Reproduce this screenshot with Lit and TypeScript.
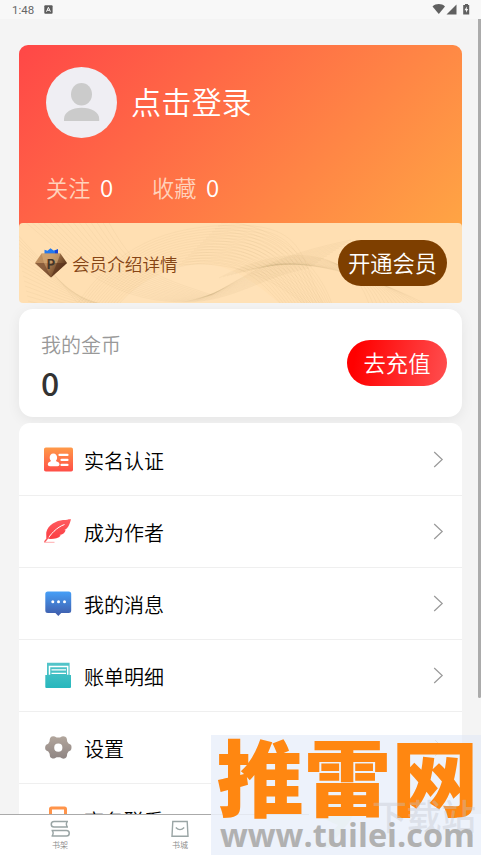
import { LitElement, html, css, svg } from "lit";
import { customElement } from "lit/decorators.js";

const range = (n: number) => Array.from({ length: n }, (_, i) => i);

const icons = {
  id: svg`<svg width="32" height="32" viewBox="0 0 32 32">
    <defs><linearGradient id="a" x1="0" y1="0" x2="0" y2="1"><stop stop-color="#ff9a48"/><stop offset="1" stop-color="#ff4e47"/></linearGradient></defs>
    <rect x="2" y="3.500" width="29" height="24" rx="1.800" fill="url(#a)"/>
    <path d="M11.300 9.400c2.400 0 3.800 1.700 3.800 4.100 0 1.500-.5 2.700-1.300 3.500 2.200.8 3.700 1.700 3.700 3.300 0 1.300-.7 1.900-2 1.900H8c-1.400 0-2.200-.6-2.200-1.900 0-1.600 1.500-2.500 3.300-3.300-.9-.8-1.400-2-1.400-3.500 0-2.400 1.300-4.100 3.600-4.100z" fill="#fff"/>
    <path d="M17.500 10.900h8M19.500 15.900h6M19.500 20.900h6" stroke="#fff" stroke-width="2.200" stroke-linecap="round"/></svg>`,
  quill: svg`<svg width="32" height="32" viewBox="0 0 32 32">
    <defs><linearGradient id="b" x1="0" y1="0" x2="0" y2="1"><stop stop-color="#ff5c60"/><stop offset="1" stop-color="#fb3d42"/></linearGradient></defs>
    <path d="M29 3.200c-2.500-.2-5 .9-8 .7-6.300.6-15.200 4.800-16.700 12.300-.2 2 .2 4.500 0 6.300 4 .8 11.500.8 14.500-3l-1.500-.5c3.500-.2 5.700-2.500 6.300-4.800l-1.300-.2C27 12.200 27.800 6.700 29 3.200z" fill="url(#b)"/>
    <path d="M22.500 8.500C15 11 8 18.500 4.500 25" fill="none" stroke="#fff" stroke-width="1"/>
    <path d="M6.500 21 2.500 26" fill="none" stroke="#fa5558" stroke-width="1.300"/>
    <path d="M2 26.300h10.500" stroke="#ffadb0" stroke-width="1"/></svg>`,
  chat: svg`<svg width="32" height="32" viewBox="0 0 32 32">
    <defs><linearGradient id="c" x1="0" y1="0" x2="0" y2="1"><stop stop-color="#469ff7"/><stop offset="1" stop-color="#3f5aa8"/></linearGradient></defs>
    <path d="M5.500 3.500h21.200Q29.200 3.500 29.200 6v16.500Q29.200 25 26.700 25h-7.500L16.300 28l-2.900-3H5.800Q3.300 25 3.300 22.500V6Q3.300 3.500 5.800 3.500z" fill="url(#c)"/>
    <g fill="#fff"><circle cx="10.800" cy="13.800" r="1.500"/><circle cx="16.500" cy="13.800" r="1.500"/><circle cx="22.500" cy="13.800" r="1.500"/></g></svg>`,
  bill: svg`<svg width="32" height="32" viewBox="0 0 32 32">
    <defs><linearGradient id="d" x1="0" y1="0" x2="0" y2="1"><stop stop-color="#55c5c9"/><stop offset="1" stop-color="#27b7bd"/></linearGradient></defs>
    <path d="M5 2.700h22.600V15H29v12q0 1-1 1H4.300q-1 0-1-1V15H5z" fill="url(#d)"/>
    <path d="M7.500 14.800V6.500h18.200v8.300" fill="none" stroke="#fff" stroke-width="1.500"/>
    <path d="M9.500 9.900h14.500M9.500 13.300h14.500" stroke="#fff" stroke-width="1.300"/></svg>`,
  gear: svg`<svg width="32" height="32" viewBox="0 0 32 32">
    <defs><linearGradient id="e" x1="0" y1="0" x2="0" y2="1"><stop stop-color="#b2a69c"/><stop offset="1" stop-color="#8f8583"/></linearGradient></defs>
    <path transform="translate(-.9 .3)" fill-rule="evenodd" fill="url(#e)" d="M10.500 4.200q2-.7 3.200 0l1.800 1h3.400l1.800-1q1.600-.8 3.500.2 1.500.8 1.600 2.500l.3 2.200 1.300 2.200 2 1q1.300.9 1 3.200 0 1.900-1 2.600l-2 1-1.300 2.300-.3 2.400q-.2 1.500-1.700 2.200-1.800.8-3.300 0l-1.800-1.100h-3.500l-1.800 1.100q-1.600.7-3.300-.2-1.600-.8-1.600-2.200l-.3-2.200-1.300-2.300-2-1Q4 17.700 4 15.700q0-2.300 1.100-3.200l2-1 1.300-2.200.3-2.300q.1-1.900 1.800-2.800zM17.200 11.300a4.100 4.100 0 1 0 0 8.200 4.100 4.100 0 0 0 0-8.200z"/></svg>`,
  phone: svg`<svg width="32" height="32" viewBox="0 0 32 32">
    <rect x="8.500" y="4" width="15" height="24" rx="1" fill="none" stroke="#ff944a" stroke-width="3"/></svg>`,
};

@customElement("menu-row")
class MenuRow extends LitElement {
  static properties = { label: {}, icon: {} };
  declare label: string;
  declare icon: keyof typeof icons;
  static styles = css`
    :host { display: flex; align-items: center; box-sizing: border-box; height: 72px; padding: 0 18px 0 23px; border-bottom: 1px solid #efefef; }
    .label { flex: 1; margin-left: 10px; font-size: 20px; line-height: 30px; color: #000; padding-top: 2px; }
    svg { display: block; }
  `;
  render() {
    return html`${icons[this.icon]}<span class="label">${this.label}</span>
      <svg width="11" height="18" viewBox="0 0 11 18"><path d="M1.200 1 9.200 8.500 1.200 16" fill="none" stroke="#999" stroke-width="1.200"/></svg>`;
  }
}

@customElement("app-root")
class AppRoot extends LitElement {
  static styles = css`
    :host { display: flex; flex-direction: column; position: relative; width: 481px; height: 855px; overflow: hidden; background: #f4f4f4; font-family: "Noto Sans CJK SC", sans-serif; font-weight: 350; }
    svg { display: block; }
    .status { flex: none; display: flex; align-items: center; box-sizing: border-box; height: 19px; padding: 0 11px 0 12px; background: #f8f8f8; color: #666; font: 11.500px/19px Roboto, sans-serif; }
    .status .time { width: 32px; padding-top: 1px; }
    .status .right { margin-left: auto; }
    .view { flex: 1; min-height: 0; display: flex; overflow: hidden; }
    .page { flex: 1; padding: 26px 16px 0 19px; }
    .bar { width: 3px; height: 679px; background: #ababab; border-radius: 0 0 2px 2px; }
    .hero { border-radius: 9px 9px 4px 4px; background: linear-gradient(135deg, #ff4747 0%, #ffa544 100%) 0 0 / 443px 182px no-repeat; color: #fff; }
    .user { display: flex; align-items: center; padding: 22px 27px 0; gap: 14px; }
    .avatar { width: 71px; height: 71px; }
    .name { font-size: 30.200px; line-height: 44px; padding-bottom: 3px; }
    .stats { display: flex; align-items: center; height: 85px; box-sizing: border-box; padding: 13px 27px 0; font-size: 22.200px; line-height: 34px; }
    .stats span { color: #ffd2bb; }
    .stats b { font-weight: 350; font-size: 24px; margin: 0 39px 0 9.500px; }
    .vip { display: grid; height: 80px; border-radius: 4px; overflow: hidden; background: #ffdfb2; }
    .vip > * { grid-area: 1 / 1; }
    .viprow { display: flex; align-items: center; padding: 0 15px; color: #864515; font-size: 17.600px; z-index: 1; }
    .viprow span { margin-left: 4px; }
    .pill { display: flex; align-items: center; justify-content: center; margin-left: auto; height: 46px; border-radius: 23px; color: #fff; font-size: 22.300px; line-height: 44px; padding-bottom: 2px; box-sizing: border-box; }
    .pill.open { width: 109px; background: #7e3f00; }
    .pill.pay { width: 100px; background: linear-gradient(100deg, #f00 10%, #ff4f50 100%); }
    .coins { display: flex; align-items: center; box-sizing: border-box; height: 108px; margin-top: 6px; padding: 0 15px 0 22px; border-radius: 14px; background: #fff; box-shadow: 0 3px 14px rgba(0,0,0,.065); }
    .cap { font-size: 20px; line-height: 30px; color: #999; margin-top: 7px; }
    .num { font-size: 32px; line-height: 44px; font-weight: 500; color: #333; }
    .list { margin-top: 6px; padding-top: 1px; border-radius: 11px; background: #fff; }
    .tabs { flex: none; display: flex; box-sizing: border-box; height: 41px; border-top: 1px solid #aaa; background: #fff; }
    .tab { width: 120px; display: flex; flex-direction: column; align-items: center; padding-top: 5px; font-size: 8px; line-height: 12px; color: #888; }
    .mark { position: absolute; left: 211px; top: 735px; }
    .mark .faint { font: 500 35px "Noto Sans CJK SC", sans-serif; }
    .mark .name2 { font: 900 83px "Noto Sans CJK SC", sans-serif; }
    .mark .url { font: 700 32px "Open Sans", sans-serif; }
    .p { font: 700 13px Inter, sans-serif; }
  `;

  waves() {
    return svg`<svg width="443" height="80" viewBox="0 0 443 80" fill="none" stroke="#a08050" stroke-opacity=".075" stroke-width=".8">
      <path d="M100 80C130 50 155 41 182 41 210 41 235 58 260 80z" fill="#ffe8c4" fill-opacity=".3" stroke="none"/>
      ${range(15).map(i => svg`
        <path d="M${5 + i * 6} -2C${45 + i * 5} ${30 + i} ${85 + i * 3} ${79 - i * 2} ${165 + i * 2} ${79 - i * .5}C${215 + i} ${79 - i * 2} ${240 + i} ${54 - i * 1.5} ${290 + i * 3} ${45 - i * 2}"/>
        <path d="M${100 - i * 3} 81C${125 - i * 2} ${52 - i * 2} ${160 - i} ${40 - i * 2.7} ${190 + i * 2} ${40 - i * 2.7}S${240 + i * 3} ${55 - i} ${262 + i * 3} 81"/>
        <path d="M${160 + i * 3} ${42 - i * 3}C${200 + i * 3} ${38 - i * 3} ${240 + i * 4} ${45 - i} ${285 + i * 2} 81"/>
        <path d="M${-5 + i} ${8 + i * 5}C${15 + i * 2} ${30 + i * 4} ${40 + i * 2} ${55 + i * 3} ${60 + i * 4} 82"/>
        <path d="M${200 + i * 4} ${55 - i}C${260 + i * 3} ${23 + i} ${330 + i * 3} ${20 + i * 3} ${350 + i * 4} 81"/>`)}
    </svg>`;
  }

  render() {
    return html`
      <div class="status"><span class="time">1:48</span>
        <svg width="9" height="9" viewBox="0 0 9 9"><rect x=".3" y=".2" width="8.300" height="8.500" rx="1" fill="#5c5c5c"/><path d="M2.500 6.700 4.400 2.300l2 4.400M3.300 5.300h2.300" fill="none" stroke="#fff"/></svg>
        <svg class="right" width="38" height="13" viewBox="0 0 38 13" fill="#606060">
          <path d="M.5 3.500C4 .3 9.500.3 13 3.500L6.800 11z"/><path d="M24.500 1.500V11.500H14.500z"/>
          <path d="M33 1h3v1h1.200v9.500h-6V2H33z"/><path d="M34.800 3.500 32.500 7.200H34v2.500l2.200-3.700h-1.400z" fill="#f8f8f8"/></svg>
      </div>
      <div class="view">
        <div class="page">
          <div class="hero">
            <div class="user">
              <svg class="avatar" viewBox="0 0 71 71"><circle cx="35.500" cy="35.500" r="35.500" fill="#efeef3"/><ellipse cx="35.500" cy="27.300" rx="10.500" ry="11.300" fill="#cbcbcb"/><path d="M18 54v-2c0-7 8-11.300 17.700-11.300S53.200 45 53.200 52v2z" fill="#cbcbcb"/></svg>
              <div class="name">点击登录</div>
            </div>
            <div class="stats"><span>关注</span><b>0</b><span>收藏</span><b>0</b></div>
            <div class="vip">
              ${this.waves()}
              <div class="viprow">
                <svg width="34" height="30" viewBox="0 0 34 30">
                  <defs><linearGradient id="g" x1="0" y1="0" x2="1" y2=".5"><stop stop-color="#c29361"/><stop offset=".45" stop-color="#b98a5c"/><stop offset="1" stop-color="#563014"/></linearGradient></defs>
                  <path d="M10.500 6V1.700l3 1.100L16.500.3l3 2.300L24 1.300V6z" fill="#2379ee"/><path d="m21 2.400 3-1.100V6h-3z" fill="#1743d8"/>
                  <path d="M7.500 5.500h19L33 15 17 29.500 1 15z" fill="url(#g)"/><path d="M7.500 5.500h19L23 15H10z" fill="#d9ad78" fill-opacity=".6"/><path d="m1 15 9 0 7 14.500z" fill="#6d4128" fill-opacity=".6"/><path d="M23 15h10L17 29.500z" fill="#58301a" fill-opacity=".6"/>
                  <text class="p" x="12.700" y="20.500" fill="#433529">P</text></svg>
                <span>会员介绍详情</span><div class="pill open">开通会员</div>
              </div>
            </div>
          </div>
          <div class="coins"><div><div class="cap">我的金币</div><div class="num">0</div></div><div class="pill pay">去充值</div></div>
          <div class="list">
            <menu-row icon="id" label="实名认证"></menu-row>
            <menu-row icon="quill" label="成为作者"></menu-row>
            <menu-row icon="chat" label="我的消息"></menu-row>
            <menu-row icon="bill" label="账单明细"></menu-row>
            <menu-row icon="gear" label="设置"></menu-row>
            <menu-row icon="phone" label="商务联系"></menu-row>
          </div>
        </div>
        <div class="bar"></div>
      </div>
      <div class="tabs">
        <div class="tab"><svg width="22" height="19" viewBox="0 0 22 19" fill="none" stroke="#9aa5a5" stroke-width="1.500"><path d="M19 1.500H5a2.700 2.700 0 0 0 0 5.500h14M18 1.500q-1.500 2.700 0 5.500M2.500 10.500h15a2.700 2.700 0 0 1 0 5.500h-15M3.500 10.500q1.500 2.700 0 5.500"/></svg>书架</div>
        <div class="tab"><svg width="22" height="19" viewBox="0 0 22 19" fill="none" stroke="#9aa5a5" stroke-width="1.400"><path d="M3.800 1.500h14.400l.8 14.800H3zM6.800 7.500q4.200 4.200 8.400 0"/></svg>书城</div>
      </div>
      <svg class="mark" width="270" height="120" viewBox="0 0 270 120">
        <rect width="270" height="120" fill="#edf2fb"/>
        <path d="M251 0h19v79h-19z" fill="#e9edf5"/>
        <path d="m224 5 8 8-8 8" fill="none" stroke="#dde1e9"/>
        <path d="M0 79.500h98" stroke="#e3e7ef"/>
        <path d="M105 69q18-16 34 0 8 10-6 24l-16 20h-8l18-23q-24-9-22-21z" fill="#e9f0f4"/>
        <text class="name2" x="5.500" y="75" textLength="262" lengthAdjust="spacingAndGlyphs" fill="#ff8711">推雷网</text>
        <text class="faint" x="161" y="95" textLength="104" fill="#c0c4cc" fill-opacity=".38">下载站</text>
        <text class="url" x="9" y="111.500" textLength="255" lengthAdjust="spacingAndGlyphs" fill="#b1b1b1">www.tuilei.com</text>
      </svg>`;
  }
}
